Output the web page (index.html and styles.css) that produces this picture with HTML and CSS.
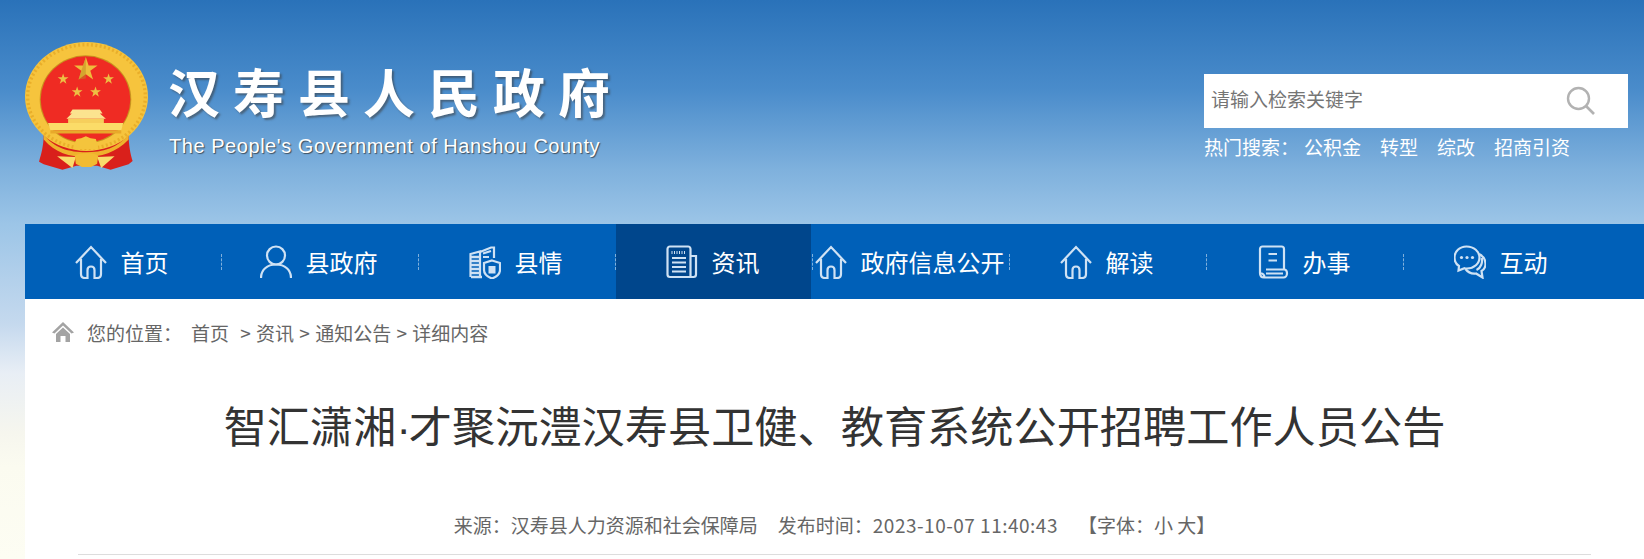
FILE: index.html
```html
<!DOCTYPE html>
<html lang="zh-CN">

<head>
    <meta charset="UTF-8">
    <title>智汇潇湘·才聚沅澧汉寿县卫健、教育系统公开招聘工作人员公告</title>
    <link rel="stylesheet" href="styles.css">
</head>

<body>
    <header class="top">
        <div class="brand">
            <svg class="emblem" viewBox="16 8 368 386" width="123" height="129">
                <defs>
                    <path id="star" d="M0 -1 L.225 -.309 L.951 -.309 L.363 .118 L.588 .809 L0 .382 L-.588 .809 L-.363 .118 L-.951 -.309 L-.225 -.309 Z"/>
                </defs>
                <path d="M72 282 C72 320 64 345 58 366 L72 374 L128 390 L170 378 L232 378 L272 390 L326 374 L338 364 C332 345 326 320 326 282 Z" fill="#d9201b"/>
                <ellipse cx="200" cy="171" rx="184" ry="163" fill="#f6c43d"/>
                <ellipse cx="200" cy="171" rx="176" ry="155" fill="none" stroke="#e9ae2a" stroke-width="10" stroke-dasharray="6 7"/>
                <ellipse cx="197" cy="180" rx="137" ry="132" fill="#c9921e"/>
                <ellipse cx="197" cy="180" rx="134" ry="129" fill="#ef2b23"/>
                <use href="#star" transform="translate(198 90) scale(37)" fill="#eebd3c"/>
                <path d="M198 53 L198 117 L176 120 Z" fill="#b98c22" opacity=".5"/>
                <use href="#star" transform="translate(130 119) scale(17)" fill="#edc044"/>
                <use href="#star" transform="translate(266 119) scale(17)" fill="#edc044"/>
                <use href="#star" transform="translate(172 158) scale(17)" fill="#edc044"/>
                <use href="#star" transform="translate(227 158) scale(17)" fill="#edc044"/>
                <path d="M150 222 L158 210 L240 210 L248 222 L240 222 L258 238 L140 238 L156 222 Z" fill="#fbe38f"/>
                <path d="M145 238 H252 V250 H145 Z" fill="#f6cf5c"/>
                <path d="M85 250 H310 L304 272 H92 Z" fill="#fbdc68"/>
                <path d="M92 272 H304 V282 H92 Z" fill="#e8a92a"/>
                <path d="M72 284 C100 325 150 338 198 338 C246 338 296 325 326 284 L326 300 C290 340 240 352 198 352 C150 352 105 340 72 300 Z" fill="#eeb22c"/>
                <path d="M198 290 L212 296 L228 298 L232 312 L236 328 L160 328 L164 312 L170 298 L184 296 Z" fill="#f4c43c"/>
                <path d="M112 350 L168 352 L158 385 Z M284 350 L232 352 L244 385 Z" fill="#f8dc6c"/>
                <path d="M165 348 C180 338 220 338 235 348 L232 372 L214 382 L186 382 L168 372 Z" fill="#f2bb32"/>
            </svg>
            <div class="brand-text">
                <div class="site-name">汉寿县人民政府</div>
                <div class="site-en">The People's Government of Hanshou County</div>
            </div>
        </div>
        <div class="search-area">
            <div class="search-box">
                <span class="placeholder">请输入检索关键字</span>
                <svg class="search-icon" viewBox="0 0 30 30" width="30" height="30">
                    <circle cx="12.5" cy="12.5" r="10.5" fill="none" stroke="#b2b2b2" stroke-width="2.4"/>
                    <path d="M20 20 L28 28" stroke="#b2b2b2" stroke-width="2.6"/>
                </svg>
            </div>
            <div class="hot">
                <span class="hot-label">热门搜索：</span>
                <a>公积金</a>
                <a>转型</a>
                <a>综改</a>
                <a>招商引资</a>
            </div>
        </div>
    </header>

    <div class="wrap">
        <nav class="nav">
            <a class="nav-item">
                <svg class="nav-icon" viewBox="0 0 32 34"><path d="M1 18 L16 2 L31 18 M6 14 V29 C6 31.500 7.500 33 10 33 H12.500 V25 C12.500 23 14 21.500 16 21.500 C18 21.500 19.500 23 19.500 25 V33 H22 C24.500 33 26 31.500 26 29 V14"/></svg>
                <span>首页</span>
            </a>
            <a class="nav-item">
                <svg class="nav-icon" viewBox="0 0 32 34"><circle cx="16" cy="10.500" r="9"/><path d="M1 33 C1 25 7 19.500 16 19.500 C25 19.500 31 25 31 33"/></svg>
                <span>县政府</span>
            </a>
            <a class="nav-item">
                <svg class="nav-icon" viewBox="0 0 32 34"><path class="thick" d="M2 12 H10 M2 16 H10 M2 20 H10 M2 24 H10 M2 28 H10 M2 32 H13"/><path d="M1.500 32 V9 L11 6.500 V32 M11 7 L22 2.500 H25 V13 M14 8.500 L22 6 M14 12 H20"/><path d="M23 15.500 L31 18 V25 C31 29 27 32 23 33.500 C19 32 15 29 15 25 V18 Z"/><path class="solid" d="M19.500 21 H26.500 V28.500 H19.500 Z"/></svg>
                <span>县情</span>
            </a>
            <a class="nav-item active">
                <svg class="nav-icon" viewBox="0 0 32 34"><path d="M24.500 32 V4 C24.500 2.500 23.500 1.500 22 1.500 H4 C2.500 1.500 1.500 2.500 1.500 4 V29.500 C1.500 31 2.500 32 4 32 H27.500 C29 32 30 31 30 29.500 V11 H24.500"/><path d="M6 13 H20 M6 17.500 H20 M6 22 H20 M6 26.500 H20"/><path class="thin" d="M6 6 V9 M8.500 6 V9 M11 6 V9 M13.500 6 V9 M16 6 V9 M18.500 6 V9"/></svg>
                <span>资讯</span>
            </a>
            <a class="nav-item">
                <svg class="nav-icon" viewBox="0 0 32 34"><path d="M1 18 L16 2 L31 18 M6 14 V29 C6 31.500 7.500 33 10 33 H12.500 V25 C12.500 23 14 21.500 16 21.500 C18 21.500 19.500 23 19.500 25 V33 H22 C24.500 33 26 31.500 26 29 V14"/></svg>
                <span>政府信息公开</span>
            </a>
            <a class="nav-item">
                <svg class="nav-icon" viewBox="0 0 32 34"><path d="M1 18 L16 2 L31 18 M6 14 V29 C6 31.500 7.500 33 10 33 H12.500 V25 C12.500 23 14 21.500 16 21.500 C18 21.500 19.500 23 19.500 25 V33 H22 C24.500 33 26 31.500 26 29 V14"/></svg>
                <span>解读</span>
            </a>
            <a class="nav-item">
                <svg class="nav-icon" viewBox="0 0 32 34"><path d="M3 28 V4 C3 2.500 4 1.500 5.500 1.500 H24.500 C26 1.500 27 2.500 27 4 V24.500 M11.500 9 H20 M11.500 15.500 H20 M9 24.500 H27 C29.500 24.500 30 26.500 30 28.500 C30 30.500 28.500 32.500 26.500 32.500 H7 C4.500 32.500 3 30.500 3 28 C5.500 28 7.500 30 7.500 32.500 M9 28.500 H26"/></svg>
                <span>办事</span>
            </a>
            <a class="nav-item">
                <svg class="nav-icon" viewBox="0 0 32 34"><path d="M12.500 1.500 C5.500 1.500 0.500 6.500 0.500 12.500 C0.500 16 2 19 5 21 L4.500 25.500 L10.500 23.200 C11 23.400 12 23.500 13 23.500 C20 23.500 25.500 18.500 25.500 12.500 C25.500 6.500 20 1.500 12.500 1.500 Z"/><path d="M25 9 C29 11 31.500 15 31.500 19 C31.500 22 30 24.500 27.500 26 L28.500 32.500 L22 28.500 C18 29 14 27.500 11.500 24 M27.500 13 C29 17 27 23 22.500 25"/><circle class="solid" cx="7.500" cy="12.500" r="1.600"/><circle class="solid" cx="13" cy="12.500" r="1.600"/><circle class="solid" cx="18.500" cy="12.500" r="1.600"/></svg>
                <span>互动</span>
            </a>
        </nav>

        <main class="content">
            <div class="crumb">
                <svg class="crumb-icon" viewBox="0 0 22 20"><path d="M11 0 L22 10.500 L19.500 11.500 L11 3.500 L2.500 11.500 L0 10.500 Z M4 12 L11 5.500 L18 12 V20 H13.500 V14 H8.500 V20 H4 Z"/></svg>
                <span class="crumb-label">您的位置：</span>
                <a class="crumb-home">首页</a>
                <span class="crumb-path">&nbsp;&gt; 资讯 &gt; 通知公告 &gt; 详细内容</span>
            </div>
            <h1 class="title">智汇潇湘<span class="dot">·</span>才聚沅澧汉寿县卫健、教育系统公开招聘工作人员公告</h1>
            <div class="meta">
                <span>来源：汉寿县人力资源和社会保障局</span>
                <span>发布时间：<span class="date">2023-10-07 11:40:43</span></span>
                <span>【字体：小 大】</span>
            </div>
        </main>
    </div>
</body>

</html>
```

FILE: styles.css
```css
* {
    margin: 0;
    padding: 0;
    box-sizing: border-box;
}

html,
body {
    height: 559px;
    overflow: hidden;
}

body {
    font-family: "Noto Sans CJK SC", "Liberation Sans", sans-serif;
    background: linear-gradient(180deg, #2a72b9 0, #4a8ccb 90px, #7fb1dd 170px, #9cc5e7 224px, #c5d9ee 324px, #e8eef5 373px, #f6f6ee 433px, #fbfbf0 467px, #fdfdf3 559px);
    color: #666;
}

.top {
    height: 224px;
    display: flex;
    justify-content: space-between;
    padding: 42px 16px 0 25px;
}

.brand {
    display: flex;
    align-items: flex-start;
}

.emblem {
    display: block;
    filter: blur(0.4px);
}

.brand-text {
    margin-left: 21px;
    padding-top: 17px;
    color: #fff;
}

.site-name {
    font-size: 52px;
    font-weight: 700;
    line-height: 64px;
    letter-spacing: 13px;
    margin-left: -1px;
    text-shadow: 2px 2px 2px rgba(60, 60, 60, 0.55);
}

.site-en {
    font-family: "Liberation Sans", sans-serif;
    font-size: 20px;
    line-height: 22px;
    margin-top: 12px;
    letter-spacing: 0.55px;
    text-shadow: 1px 1px 1px rgba(40, 40, 40, 0.7);
}

.search-area {
    width: 424px;
    padding-top: 32px;
}

.search-box {
    height: 54px;
    background: #fff;
    display: flex;
    align-items: center;
    justify-content: space-between;
    padding: 0 32px 6px 7px;
}

.search-icon {
    margin-top: 6px;
}

.placeholder {
    font-size: 19px;
    color: #757575;
}

.hot {
    display: flex;
    margin-top: 6px;
    font-size: 19px;
    line-height: 26px;
    color: #fff;
}

.hot a {
    margin-right: 19px;
}

.hot-label {
    margin-right: 5px;
}

.wrap {
    margin-left: 25px;
    background: #fff;
    height: 335px;
}

.nav {
    display: flex;
    height: 75px;
    background: #0060b8;
}

.nav-item {
    width: 197px;
    height: 75px;
    padding-right: 2px;
    display: flex;
    align-items: center;
    justify-content: center;
    gap: 14px;
    color: #fff;
    font-size: 24px;
    position: relative;
}

.nav-item span {
    margin-right: 2px;
}

.nav-item::after {
    content: "";
    position: absolute;
    right: 0;
    top: 30px;
    height: 16px;
    border-right: 1px dashed #7fb0dc;
}

.nav-item:last-child::after {
    display: none;
}

.nav-item.active {
    background: #00468c content-box;
}

.nav-icon {
    width: 32px;
    height: 34px;
    fill: none;
    stroke: #cfe2f4;
    stroke-width: 2.200;
    flex-shrink: 0;
}

.nav-icon .solid {
    fill: #cfe2f4;
    stroke: none;
}

.nav-icon .thin {
    stroke-width: 1;
}

.nav-icon .thick {
    stroke-width: 2.400;
}

.crumb {
    display: flex;
    align-items: center;
    height: 34px;
    margin: 16px 0 0 27px;
    font-size: 19px;
    color: #666;
}

.crumb-icon {
    width: 22px;
    height: 20px;
    fill: #a3a3a3;
    margin-right: 13px;
}

.crumb-label {
    margin-right: 9px;
}

.crumb-home {
    margin-right: 6px;
}

.crumb-path {
    word-spacing: 1px;
}

.title {
    margin-top: 45px;
    font-size: 43.200px;
    font-weight: 400;
    line-height: 60px;
    color: #333;
    text-align: center;
}

.dot {
    font-family: "Liberation Sans", sans-serif;
    letter-spacing: -2px;
}

.meta {
    margin: 54px 53px 0;
    padding-bottom: 16px;
    border-bottom: 1px solid #ddd;
    display: flex;
    justify-content: center;
    gap: 20px;
    font-size: 19px;
    line-height: 26px;
}

.date {
    letter-spacing: 0.5px;
}
```
